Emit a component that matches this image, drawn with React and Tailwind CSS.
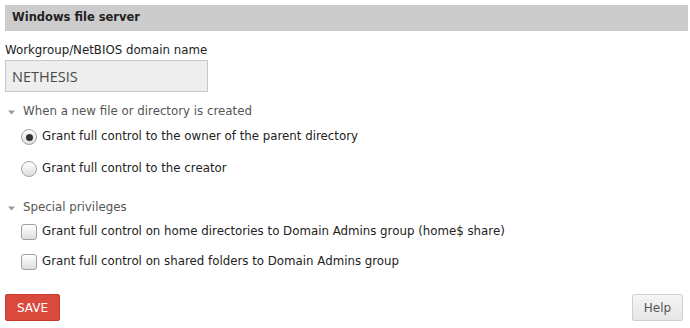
import { useState } from "react";

const font = { fontFamily: '"DejaVu Sans", "Liberation Sans", sans-serif' };

const Caret = () => (
  <svg width="7" height="5" viewBox="0 0 7 5" className="mr-[8px] shrink-0">
    <path d="M0 0.5 L7 0.5 L3.5 4.5 Z" fill="#999" />
  </svg>
);

const Radio = ({ checked, label, onClick }) => (
  <label className="flex h-[32px] cursor-pointer items-center pl-[16px]" onClick={onClick}>
    <span className="flex h-[16px] w-[16px] shrink-0 items-center justify-center rounded-full border border-[#a0a0a0] bg-gradient-to-b from-white to-[#dedede] shadow-[inset_0_1px_1px_rgba(255,255,255,0.8)]">
      {checked && <span className="h-[7px] w-[7px] rounded-full bg-[#333]" />}
    </span>
    <span className="ml-[5px] text-[11.8px] text-[#222]">{label}</span>
  </label>
);

const Check = ({ checked, label, onClick }) => (
  <label className="flex h-[30px] cursor-pointer items-center pl-[16px]" onClick={onClick}>
    <span className="flex h-[16px] w-[16px] shrink-0 items-center justify-center rounded-[3px] border border-[#a0a0a0] bg-gradient-to-b from-white to-[#dedede]">
      {checked && <span className="text-[11px] leading-none text-[#333]">✓</span>}
    </span>
    <span className="ml-[5px] text-[11.8px] text-[#222]">{label}</span>
  </label>
);

export default function App() {
  const [owner, setOwner] = useState("parent");
  const [privs, setPrivs] = useState({ home: false, shared: false });

  return (
    <div className="h-[328px] w-[690px] bg-white px-[5px] pt-[5px]" style={font}>
      <div className="flex h-[26px] w-[683px] items-center bg-[#cccccc] pl-[7px] text-[11.5px] font-bold text-[#222]">
        Windows file server
      </div>

      <div className="mt-[12px] text-[11.8px] leading-[14px] text-[#222]">Workgroup/NetBIOS domain name</div>
      <input
        className="mt-[3px] h-[32px] w-[203px] border border-[#c8c8c8] bg-[#eeeeee] px-[6px] text-[14.5px] text-[#4a4a4a] outline-none"
        style={{ fontFamily: '"Open Sans", "DejaVu Sans", sans-serif' }}
        defaultValue="NETHESIS"
      />

      <div className="mt-[13px] flex h-[14px] items-center pl-[3px] text-[11.8px] text-[#555]">
        <Caret />
        When a new file or directory is created
      </div>
      <div className="mt-[2px]">
        <Radio
          checked={owner === "parent"}
          onClick={() => setOwner("parent")}
          label="Grant full control to the owner of the parent directory"
        />
        <Radio
          checked={owner === "creator"}
          onClick={() => setOwner("creator")}
          label="Grant full control to the creator"
        />
      </div>

      <div className="mt-[16px] flex h-[14px] items-center pl-[3px] text-[11.8px] text-[#555]">
        <Caret />
        Special privileges
      </div>
      <div className="mt-[2px]">
        <Check
          checked={privs.home}
          onClick={() => setPrivs((p) => ({ ...p, home: !p.home }))}
          label="Grant full control on home directories to Domain Admins group (home$ share)"
        />
        <Check
          checked={privs.shared}
          onClick={() => setPrivs((p) => ({ ...p, shared: !p.shared }))}
          label="Grant full control on shared folders to Domain Admins group"
        />
      </div>

      <div className="mt-[17px] flex w-[678px] items-center justify-between">
        <button
          type="button"
          className="h-[27px] w-[55px] rounded-[2px] border border-[#c9392d] bg-[#da4a3c] text-[12px] text-white"
        >
          SAVE
        </button>
        <button
          type="button"
          className="h-[27px] w-[51px] rounded-[2px] border border-[#cfcfcf] bg-gradient-to-b from-[#f5f5f5] to-[#e6e6e6] text-[12px] text-[#555]"
        >
          Help
        </button>
      </div>
    </div>
  );
}
